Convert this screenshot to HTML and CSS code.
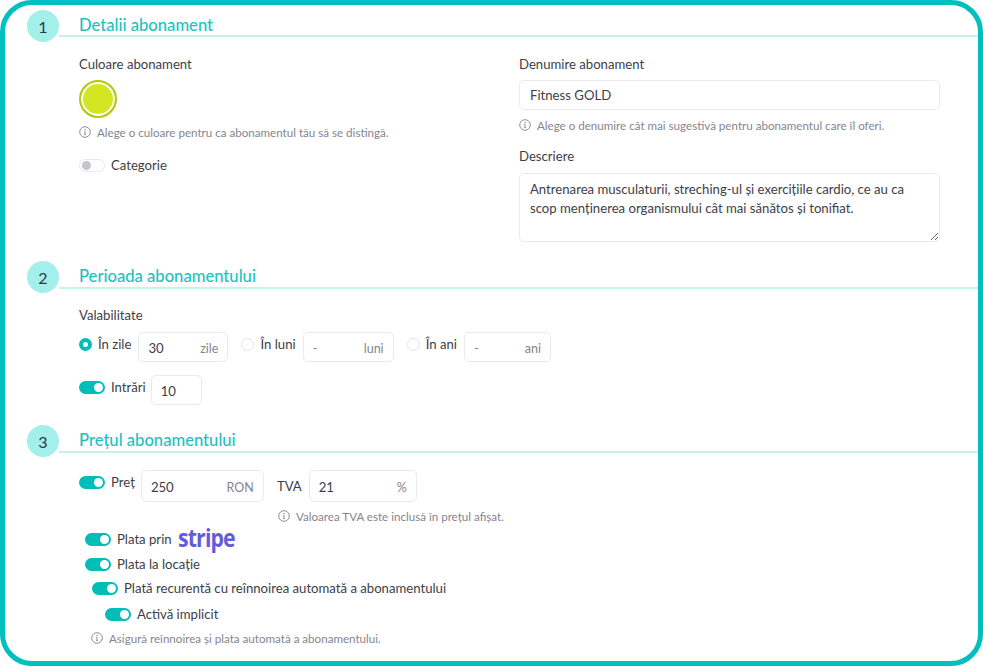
FILE: index.html
```html
<!DOCTYPE html>
<html lang="ro">
<head>
<meta charset="utf-8">
<title>Abonament</title>
<link rel="stylesheet" href="styles.css">
</head>
<body>
<svg class="sprite" width="0" height="0" aria-hidden="true"><symbol id="info" viewBox="0 0 12 12"><circle cx="6" cy="6" r="5.3" fill="none" stroke="currentColor" stroke-width="0.9"/><path d="M6 5.3v3.2M5.1 8.6h1.8M5.2 5.3H6" fill="none" stroke="currentColor" stroke-width="0.9"/><circle cx="6" cy="3.4" r="0.65" fill="currentColor"/></symbol></svg>
<main class="frame">
  <section class="section section-1">
    <header class="head"><span class="num">1</span><h2 class="title">Detalii abonament</h2></header>
    <div class="details">
      <div class="col-left">
        <div class="label">Culoare abonament</div>
        <div class="swatch"></div>
        <p class="hint hint-color"><svg class="info"><use href="#info"/></svg>Alege o culoare pentru ca abonamentul tău să se distingă.</p>
        <div class="row row-cat"><span class="toggle off"></span><span>Categorie</span></div>
      </div>
      <div class="col-right">
        <div class="label">Denumire abonament</div>
        <div class="field field-name">Fitness GOLD</div>
        <p class="hint hint-name"><svg class="info"><use href="#info"/></svg>Alege o denumire cât mai sugestivă pentru abonamentul care îl oferi.</p>
        <div class="label label-desc">Descriere</div>
        <textarea class="area" readonly>Antrenarea musculaturii, streching-ul și exercițiile cardio, ce au ca scop menținerea organismului cât mai sănătos și tonifiat.</textarea>
      </div>
    </div>
  </section>
  <section class="section section-2">
    <header class="head"><span class="num">2</span><h2 class="title">Perioada abonamentului</h2></header>
    <div class="body">
      <div class="label">Valabilitate</div>
      <div class="row row-valid">
        <span class="radio on"></span><span class="opt">În zile</span>
        <div class="field w90"><span>30</span><span class="unit">zile</span></div>
        <span class="radio radio-2"></span><span class="opt">În luni</span>
        <div class="field w91"><span class="dash">-</span><span class="unit">luni</span></div>
        <span class="radio radio-3"></span><span class="opt">În ani</span>
        <div class="field w87"><span class="dash">-</span><span class="unit">ani</span></div>
      </div>
      <div class="row row-entries"><span class="toggle"></span><span class="opt">Intrări</span><div class="field w51"><span>10</span></div></div>
    </div>
  </section>
  <section class="section section-3">
    <header class="head"><span class="num">3</span><h2 class="title">Prețul abonamentului</h2></header>
    <div class="body">
      <div class="row row-price">
        <span class="toggle"></span><span class="opt">Preț</span>
        <div class="field w123"><span>250</span><span class="unit">RON</span></div>
        <span class="tva">TVA</span>
        <div class="field w108"><span>21</span><span class="unit">%</span></div>
      </div>
      <p class="hint hint-tva"><svg class="info"><use href="#info"/></svg>Valoarea TVA este inclusă în prețul afișat.</p>
      <div class="row pay pay-stripe"><span class="toggle"></span><span>Plata prin</span><span class="stripe">stripe</span></div>
      <div class="row pay pay-loc"><span class="toggle"></span><span>Plata la locație</span></div>
      <div class="row pay pay-rec"><span class="toggle"></span><span>Plată recurentă cu reînnoirea automată a abonamentului</span></div>
      <div class="row pay pay-def"><span class="toggle"></span><span>Activă implicit</span></div>
      <p class="hint hint-auto"><svg class="info"><use href="#info"/></svg>Asigură reînnoirea și plata automată a abonamentului.</p>
    </div>
  </section>
</main>
</body>
</html>
```

FILE: styles.css
```css
* { box-sizing: border-box; }
html, body { margin: 0; padding: 0; background: #fff; }
body {
  width: 983px;
  height: 666px;
  overflow: hidden;
  font-family: "Lato", "Noto Sans", sans-serif;
  font-size: 13.15px;
  color: #3e3e48;
}
.sprite { position: absolute; }
.frame {
  width: 983px;
  height: 666px;
  border: 5px solid #00bfbf;
  border-radius: 32px;
  padding: 5px 0 0 22px;
  background: #fff;
  overflow: hidden;
}
.head { display: flex; align-items: flex-start; height: 32px; }
.num {
  flex: none;
  width: 32px;
  height: 32px;
  border-radius: 50%;
  background: #a3efe9;
  display: flex;
  align-items: center;
  justify-content: center;
  font-size: 16px;
  color: #2f3a40;
}
.title {
  flex: 1;
  margin: 0;
  height: 27px;
  padding-left: 20px;
  line-height: 19px;
  padding-top: 6px;
  font-size: 16.6px;
  font-weight: 500;
  color: #1cc2bf;
  border-bottom: 2px solid #c4f3ef;
}
.section-2 .title, .section-3 .title { height: 28px; }
.details { display: grid; grid-template-columns: 440px 421px; padding: 13px 0 0 52px; }
.body { padding-left: 52px; }
.label { height: 18px; line-height: 18px; }
.swatch {
  width: 38px;
  height: 38px;
  margin-top: 7px;
  border-radius: 50%;
  background: #d4e623;
  border: 2px solid #b6c80f;
  box-shadow: inset 0 0 0 2px #fff;
}
.hint {
  display: flex;
  align-items: center;
  margin: 0;
  height: 16px;
  font-size: 11.6px;
  color: #85858d;
}
.info { width: 12px; height: 12px; margin-right: 6px; flex: none; color: #85858d; }
.hint-color { margin-top: 6px; }
.row { display: flex; align-items: center; }
.row-cat { margin-top: 17px; gap: 6px; }
.toggle {
  flex: none;
  position: relative;
  width: 26px;
  height: 13px;
  border-radius: 7px;
  background: #00bdb8;
}
.toggle::after {
  content: "";
  position: absolute;
  right: 2px;
  top: 2px;
  width: 9px;
  height: 9px;
  border-radius: 50%;
  background: #fff;
}
.toggle.off { background: #fff; border: 1px solid #e8e8ee; }
.toggle.off::after { left: 2px; right: auto; top: 1px; background: #c3c6cd; }
.field {
  display: flex;
  align-items: center;
  justify-content: space-between;
  flex: none;
  height: 30px;
  padding: 2px 9px 0;
  border: 1px solid #e9e9ef;
  border-radius: 5px;
  background: #fff;
  font-size: 13.15px;
}
.field-name { margin-top: 7px; width: 421px; padding: 0 10px; }
.unit { color: #85858d; font-size: 12.5px; }
.dash { color: #85858d; }
.hint-name { margin-top: 7px; }
.label-desc { margin-top: 14px; }
.area {
  display: block;
  width: 421px;
  height: 69px;
  margin-top: 8px;
  padding: 6px 10px;
  border: 1px solid #e9e9ef;
  border-radius: 5px;
  outline: none;
  font: inherit;
  line-height: 19px;
  color: inherit;
}
.section-2 { margin-top: 19px; }
.section-2 .label { margin-top: 13px; }
.row-valid { margin-top: 8px; }
.radio {
  flex: none;
  width: 13px;
  height: 13px;
  border-radius: 50%;
  border: 1px solid #e3e3e9;
  background: #fff;
  margin-right: 6px;
}
.radio.on { border: 4px solid #00bdb8; }
.radio-2 { margin-left: 13px; }
.radio-3 { margin-left: 13px; }
.opt { align-self: flex-start; margin-top: 3px; line-height: 18px; margin-right: 7px; }
.row-valid .radio { align-self: flex-start; margin-top: 6px; }
.w90 { width: 90px; }
.w91 { width: 91px; }
.w87 { width: 87px; }
.w51 { width: 51px; }
.w123 { width: 123px; }
.w108 { width: 108px; }
.row-entries { margin-top: 13px; }
.row-entries .opt { margin-right: 5px; }
.row-price .opt { margin-right: 6px; }
.row-entries .toggle, .row-price .toggle { align-self: flex-start; margin-top: 6px; margin-right: 6px; }
.section-3 { margin-top: 20px; }
.row-price { margin-top: 13px; height: 32px; }
.row-price .field { height: 32px; }
.tva { margin: 0 7px 0 13px; }
.hint-tva { margin: 6px 0 0 199px; }
.pay { gap: 6px; height: 18px; }
.pay-stripe { margin: 2px 0 0 6px; height: 26px; }
.stripe {
  font-family: "Open Sans", sans-serif;
  font-weight: 700;
  font-size: 25px;
  line-height: 22px;
  height: 26px;
  letter-spacing: -1px;
  color: #635bdb;
  transform: scaleX(0.85);
  transform-origin: left center;
}
.pay-loc { margin: 3px 0 0 6px; }
.pay-rec { margin: 6px 0 0 13px; }
.pay-def { margin: 8px 0 0 26px; }
.hint-auto { margin: 7px 0 0 12px; }
```
